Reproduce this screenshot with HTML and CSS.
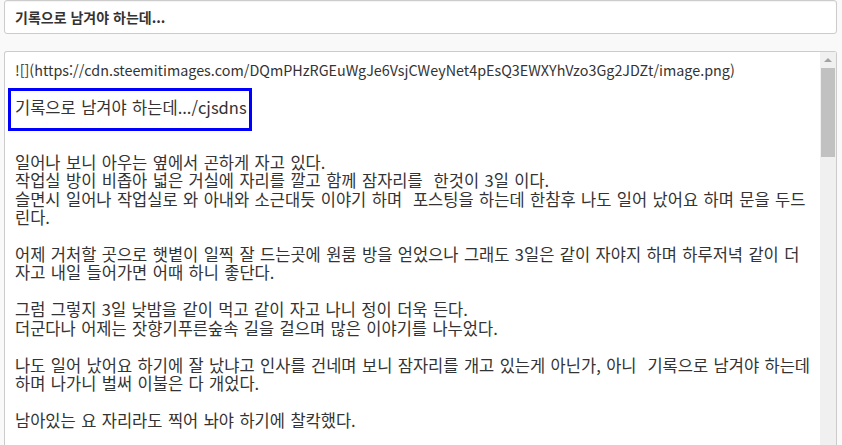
FILE: index.html
```html
<!DOCTYPE html>
<html lang="ko">
<head>
  <meta charset="UTF-8" />
  <meta name="viewport" content="width=device-width, initial-scale=1.0" />
  <title>글쓰기</title>
  <link rel="stylesheet" href="styles.css">
</head>
<body>
  <div class="editor-page">
    <div class="title-field">기록으로 남겨야 하는데...</div>

    <div class="body-field">
      <div class="body-text"><span class="md-link">![](https://cdn.steemitimages.com/DQmPHzRGEuWgJe6VsjCWeyNet4pEsQ3EWXYhVzo3Gg2JDZt/image.png)</span>

기록으로 남겨야 하는데.../cjsdns


일어나 보니 아우는 옆에서 곤하게 자고 있다.
작업실 방이 비좁아 넓은 거실에 자리를 깔고 함께 잠자리를  한것이 3일 이다.
슬면시 일어나 작업실로 와 아내와 소근대듯 이야기 하며  포스팅을 하는데 한참후 나도 일어 났어요 하며 문을 두드린다.

어제 거처할 곳으로 햇볕이 일찍 잘 드는곳에 원룸 방을 얻었으나 그래도 3일은 같이 자야지 하며 하루저녁 같이 더 자고 내일 들어가면 어때 하니 좋단다.

그럼 그렇지 3일 낮밤을 같이 먹고 같이 자고 나니 정이 더욱 든다.
더군다나 어제는 잣향기푸른숲속 길을 걸으며 많은 이야기를 나누었다.

나도 일어 났어요 하기에 잘 났냐고 인사를 건네며 보니 잠자리를 개고 있는게 아닌가, 아니  기록으로 남겨야 하는데 하며 나가니 벌써 이불은 다 개었다.

남아있는 요 자리라도 찍어 놔야 하기에 찰칵했다.
</div>
      <div class="scrollbar">
        <div class="scroll-arrow"></div>
        <div class="scroll-thumb"></div>
      </div>
      <div class="highlight"></div>
    </div>
  </div>
</body>
</html>
```

FILE: styles.css
```css
body {
  margin: 0;
  background: #f9f9f9;
  color: #333;
  font-family: "Noto Sans CJK KR", "Noto Sans", sans-serif;
  overflow: hidden;
}
.editor-page {
  padding: 0 5px 0 4px;
}
.title-field {
  height: 34px;
  box-sizing: border-box;
  border: 1px solid #ccc;
  border-radius: 3px;
  background: #fff;
  padding: 0 10px;
  font-size: 14px;
  font-weight: bold;
  line-height: 32px;
  box-shadow: inset 0 1px 1px rgba(0, 0, 0, 0.05);
}
.body-field {
  position: relative;
  margin-top: 17px;
  height: 410px;
  box-sizing: border-box;
  border: 1px solid #ccc;
  border-bottom: none;
  border-radius: 3px 3px 0 0;
  background: #fff;
  display: flex;
}
.body-text {
  flex: 1;
  padding: 8px 6px 0 10px;
  white-space: pre-wrap;
  font-size: 16.5px;
  line-height: 18.4px;
  word-spacing: 0.8px;
  overflow: hidden;
}
.md-link {
  font-size: 14.35px;
  word-spacing: 0;
}
.scrollbar {
  width: 16px;
  background: #f0f0f0;
  display: flex;
  flex-direction: column;
  align-items: center;
}
.scroll-arrow {
  margin-top: 6px;
  width: 0;
  height: 0;
  border-left: 4px solid transparent;
  border-right: 4px solid transparent;
  border-bottom: 4px solid #a3a3a3;
}
.scroll-thumb {
  margin-top: 6px;
  width: 14px;
  height: 89px;
  background: #c1c1c1;
}
.highlight {
  position: absolute;
  left: 3px;
  top: 36px;
  width: 244px;
  height: 43px;
  box-sizing: border-box;
  border: 3px solid #0000ff;
}
```
